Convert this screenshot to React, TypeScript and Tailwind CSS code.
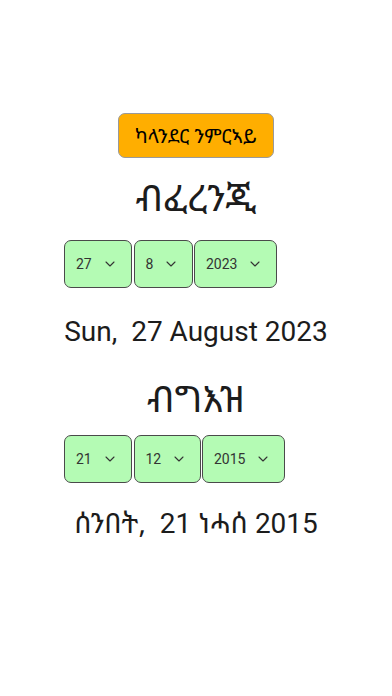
import { ChevronDown } from "lucide-react";

const Select = ({ value, width }: { value: string; width: string }) => (
  <div
    className={`${width} h-[48px] flex items-center justify-between pl-[11px] pr-[13px] bg-[#b4fbb4] border border-[#4a4a4a] rounded-[7px] text-[14px] text-[#333]`}
  >
    <span>{value}</span>
    <ChevronDown size={16} strokeWidth={1.6} className="text-[#333]" />
  </div>
);

const eth = "font-['Noto_Sans_Ethiopic',sans-serif] font-normal";

export default function App() {
  return (
    <div className="w-[392px] h-[696px] bg-white flex flex-col items-center font-['Roboto','Noto_Sans_Ethiopic',sans-serif] text-[#1c1c1c]">
      <button className={`mt-[113px] w-[156px] h-[45px] bg-[#ffae00] border border-[#9a9a9a] rounded-[7px] text-[20px] text-black ${eth}`}>
        ካላንደር ንምርኣይ
      </button>
      <div className={`mt-[15px] text-[37px] leading-[48px] ${eth}`}>ብፈረንጂ</div>
      <div className="self-start ml-[64px] mt-[19px] flex gap-[1.5px]">
        <Select value="27" width="w-[68px]" />
        <Select value="8" width="w-[59px]" />
        <Select value="2023" width="w-[83px]" />
      </div>
      <div className="mt-[24px] text-[28px] leading-[40px] whitespace-pre">Sun,  27 August 2023</div>
      <div className={`mt-[22px] text-[37px] leading-[48px] ${eth}`}>ብግእዝ</div>
      <div className="self-start ml-[64px] mt-[13px] flex gap-[1.5px]">
        <Select value="21" width="w-[68px]" />
        <Select value="12" width="w-[67px]" />
        <Select value="2015" width="w-[83px]" />
      </div>
      <div className="mt-[19px] text-[28px] leading-[40px] whitespace-pre">
        <span className={eth}>ሰንበት,</span>  21 <span className={eth}>ነሓሰ</span> 2015
      </div>
    </div>
  );
}
